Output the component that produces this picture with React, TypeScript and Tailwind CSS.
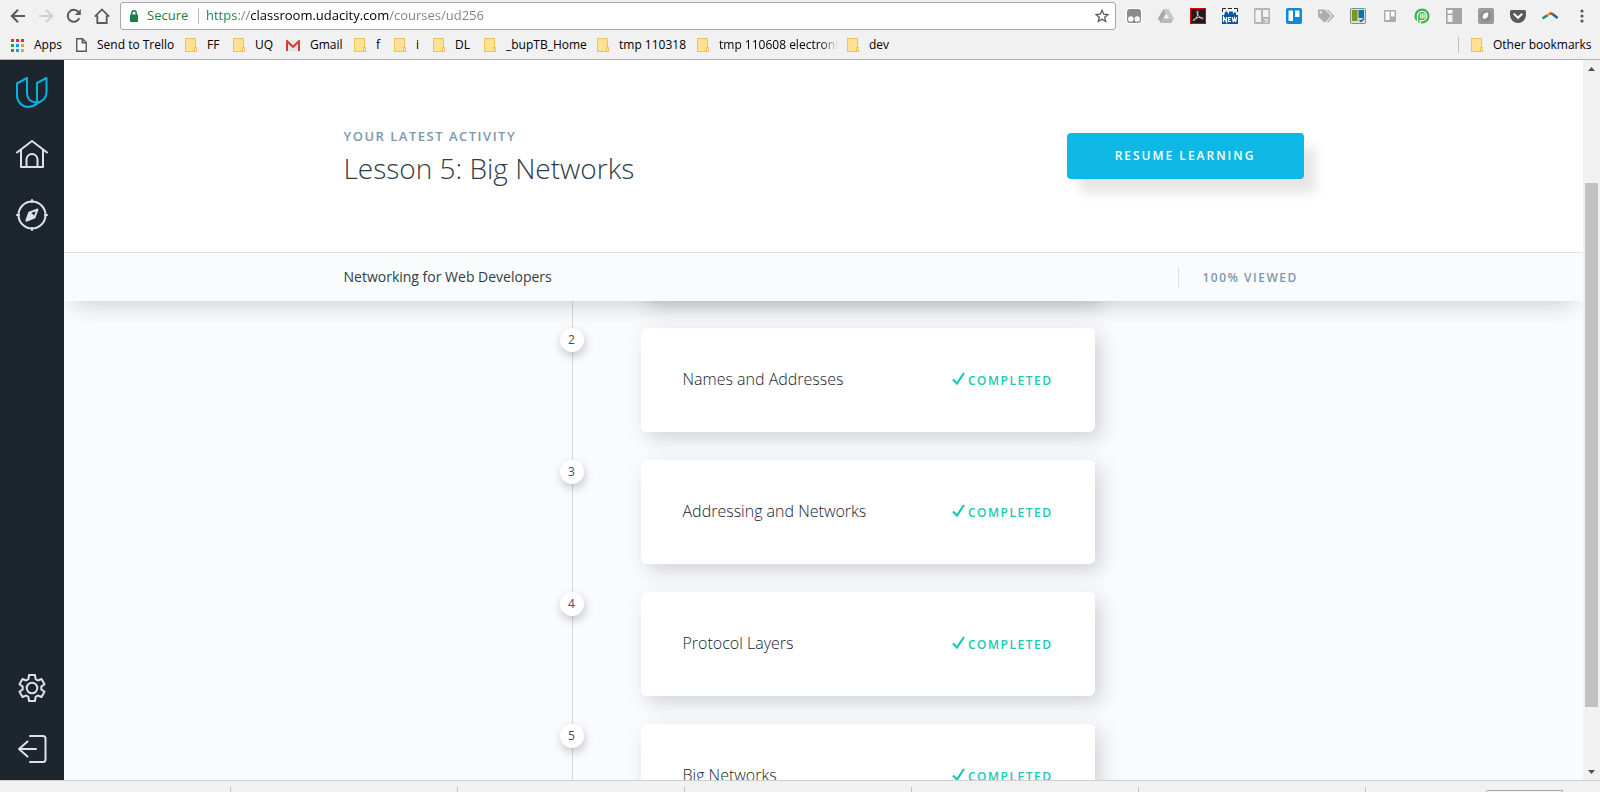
import type { ReactNode } from "react";
import { FaTags } from "react-icons/fa";

function FolderIcon() {
  return (
    <svg width="12" height="14" viewBox="0 0 12 14" className="shrink-0" aria-hidden="true">
      <rect x="0.5" y="0.5" width="10" height="13" fill="#ffe293" stroke="#edc35a" />
      <rect x="9.5" y="9.5" width="2" height="4" fill="#ffe9ad" stroke="#edc35a" />
    </svg>
  );
}

const appDots = [
  ["#f0263c", "#f0263c", "#f0263c"],
  ["#1f9d55", "#1b98f0", "#f5a11c"],
  ["#1f9d55", "#1b98f0", "#f5a11c"],
];

function AppsIcon() {
  return (
    <svg width="13" height="13" viewBox="0 0 13 13" className="shrink-0" aria-hidden="true">
      {appDots.map((row, y) =>
        row.map((fill, x) => <rect key={`${x}-${y}`} x={x * 5} y={y * 5} width="3" height="3" fill={fill} />),
      )}
    </svg>
  );
}

function PageIcon() {
  return (
    <svg width="11" height="14" viewBox="0 0 11 14" className="shrink-0" aria-hidden="true">
      <path d="M0.75 0.75H6.5L10.25 4.5V13.25H0.75Z M6.25 1V4.75H10" fill="#fafafa" stroke="#5a5a5a" strokeWidth="1.4" />
    </svg>
  );
}

function GmailIcon() {
  return (
    <svg width="14" height="11" viewBox="0 0 14 11" className="shrink-0" aria-hidden="true">
      <rect x="0.5" width="13" height="11" rx="1" fill="#e6e6e6" />
      <path d="M1 11V1.2L7 6.8L13 1.2V11" fill="none" stroke="#d63b35" strokeWidth="2" />
    </svg>
  );
}

type Bookmark = { label: string; width: string; icon?: ReactNode; fade?: boolean };

const bookmarks: Bookmark[] = [
  { label: "Apps", width: "w-[65px]", icon: <AppsIcon /> },
  { label: "Send to Trello", width: "w-[109px]", icon: <PageIcon /> },
  { label: "FF", width: "w-[48px]" },
  { label: "UQ", width: "w-[53px]" },
  { label: "Gmail", width: "w-[68px]", icon: <GmailIcon /> },
  { label: "f", width: "w-[40px]" },
  { label: "i", width: "w-[39px]" },
  { label: "DL", width: "w-[51px]" },
  { label: "_bupTB_Home", width: "w-[113px]" },
  { label: "tmp 110318", width: "w-[100px]" },
  { label: "tmp 110608 electroni", width: "w-[150px]", fade: true },
  { label: "dev", width: "w-[60px]" },
];

const extensions: { name: string; art: ReactNode }[] = [
  {
    name: "Scripts",
    art: (
      <>
        <rect x="0" y="0" width="16" height="16" rx="3" fill="#fff" />
        <rect x="1" y="1" width="14" height="14" rx="3" fill="#8c8c8c" />
        <circle cx="4.8" cy="11" r="2.7" fill="#fff" />
        <circle cx="11.2" cy="11" r="2.7" fill="#fff" />
      </>
    ),
  },
  {
    name: "Drive",
    art: (
      <>
        <path d="M5.5 1H10.5L16 10.5H11Z" fill="#c9c9c9" />
        <path d="M5.5 1L8 5.5L2.7 15L0 10.5Z" fill="#aaa" />
        <path d="M5.3 10.5H16L13.3 15H2.7Z" fill="#b9b9b9" />
      </>
    ),
  },
  {
    name: "PDF",
    art: (
      <>
        <rect x="0.5" y="0.5" width="15" height="15" fill="#2b1517" stroke="#e3000f" />
        <path d="M7.3 3.2C8.7 2.8 8 6 7 8.4C6 11 4 13.3 3.2 12.5C2.5 11.5 6 10 8.5 9.5C11 9 13.3 9.4 13 10.6C12.5 11.8 9.4 9.5 8 7.2C7 5.5 6.6 3.6 7.3 3.2Z" fill="none" stroke="#ddd" strokeWidth="0.9" />
      </>
    ),
  },
  {
    name: "New captures",
    art: (
      <>
        <path d="M0.5 4V0.5H4M6 0.5H10M12 0.5H15.5V4" fill="none" stroke="#222" strokeWidth="1" />
        <path d="M0 7H2.5V5L4.500 3L7 6.500V3.500H10.500L12 6.500V4.500H14V7H16V16H0Z" fill="#0d55a0" />
        <path d="M1.5 14V9L4.5 14V9M9 9.5H6.5V13.5H9M6.5 11.5H8.5M10.3 9L11.2 14L12.4 10L13.6 14L14.6 9" fill="none" stroke="#fff" strokeWidth="1.2" />
      </>
    ),
  },
  {
    name: "Board cards",
    art: (
      <>
        <rect width="16" height="16" rx="1" fill="#b4b4b4" />
        <rect x="1.5" y="2" width="5.5" height="12" fill="#f2f2f2" />
        <rect x="9" y="2" width="5.5" height="7" fill="#f2f2f2" />
        <path d="M10 11.5H14L11 14H14" fill="none" stroke="#f2f2f2" />
      </>
    ),
  },
  {
    name: "Trello",
    art: (
      <>
        <rect width="16" height="16" rx="2" fill="#0b8ad6" />
        <rect x="2.5" y="2.5" width="4.5" height="10.5" rx="0.5" fill="#fff" />
        <rect x="9" y="2.5" width="4.5" height="6.5" rx="0.5" fill="#fff" />
      </>
    ),
  },
  { name: "Tags", art: <FaTags size={16} color="#adadad" /> },
  {
    name: "Columns",
    art: (
      <>
        <rect x="0.5" y="0.5" width="15" height="15" rx="1" fill="#cfe0ea" stroke="#6b93ac" />
        <rect x="2" y="2" width="5.5" height="11" fill="#869414" />
        <rect x="8.5" y="2" width="5.5" height="8" fill="#0b73a0" />
        <path d="M9.5 12L11 13.5L14 10.5" fill="none" stroke="#174c6e" strokeWidth="1.2" />
      </>
    ),
  },
  {
    name: "Mini board",
    art: (
      <>
        <rect x="2" y="2" width="12" height="12" rx="1" fill="#adadad" />
        <rect x="3.5" y="3.5" width="4" height="8.5" fill="#fff" />
        <rect x="9" y="3.5" width="3.5" height="5" fill="#fff" />
      </>
    ),
  },
  {
    name: "Print",
    art: (
      <>
        <circle cx="8" cy="8" r="7.6" fill="#3db54a" />
        <path d="M3.500 15V8A4.600 4.600 0 1 1 8.300 12.600H6.200V15.500" fill="none" stroke="#fff" strokeWidth="1.3" />
        <path d="M6.500 5.500V10.500M8.300 5V11M10.200 5.500V10.500M5.500 7H11.500M5.500 9H11.500" stroke="#fff" strokeWidth="0.8" />
      </>
    ),
  },
  {
    name: "Side panel",
    art: (
      <>
        <rect width="16" height="16" fill="#a5a5a5" />
        <rect x="1.5" y="2" width="5" height="3.5" fill="#fff" />
        <rect x="1.5" y="7" width="5" height="7" fill="#f2f2f2" />
      </>
    ),
  },
  {
    name: "Notes",
    art: (
      <>
        <rect width="16" height="16" rx="2" fill="#9a9a9a" />
        <circle cx="8" cy="8" r="5.5" fill="#8a8a8a" />
        <path d="M5 10.500C4 7.500 6 4.300 10 4.600C11 8 9 11.800 5 10.500Z" fill="#fff" />
      </>
    ),
  },
  {
    name: "Pocket",
    art: (
      <>
        <path d="M1.5 2H14.5Q16 2 16 3.5V7A8 8 0 0 1 0 7V3.5Q0 2 1.5 2Z" fill="#58595b" />
        <path d="M4.3 6.3L8 9.8L11.7 6.3" fill="none" stroke="#fff" strokeWidth="2" strokeLinecap="round" />
      </>
    ),
  },
  {
    name: "Arc",
    art: (
      <g fill="none" strokeWidth="2.6">
        <path d="M0.500 10.500L3.500 8.500" stroke="#1e9b56" />
        <path d="M3 8.800L6 7" stroke="#2a7fc0" />
        <path d="M5.500 7.200L8 5.700" stroke="#f2b01e" />
        <path d="M7.500 5.700Q9.500 5.200 11 6.300" stroke="#e0402f" />
        <path d="M10.800 6.200L15.500 10" stroke="#1d63b5" />
      </g>
    ),
  },
  {
    name: "Menu",
    art: (
      <g fill="#5a5a5a">
        <circle cx="8" cy="3" r="1.6" />
        <circle cx="8" cy="8" r="1.6" />
        <circle cx="8" cy="13" r="1.6" />
      </g>
    ),
  },
];

function BrowserBar() {
  return (
    <header className="h-[60px] shrink-0 border-b border-[#b0b0b0] bg-[#f1f1f1] text-black">
      <div className="flex h-8 items-center pr-[10px] pl-[10px]">
        <nav className="flex w-[110px] gap-3 text-[#5a5a5a]">
          <button aria-label="Back">
            <svg width="16" height="16" viewBox="0 0 16 16" fill="none" stroke="currentColor" strokeWidth="2">
              <path d="M15 8H2.5M8 1.8L1.8 8L8 14.2" />
            </svg>
          </button>
          <button aria-label="Forward" className="text-[#d0d0d0]">
            <svg width="16" height="16" viewBox="0 0 16 16" fill="none" stroke="currentColor" strokeWidth="2">
              <path d="M1 8H13.5M8 1.8L14.2 8L8 14.2" />
            </svg>
          </button>
          <button aria-label="Reload">
            <svg width="16" height="16" viewBox="0 0 16 16" fill="none" stroke="currentColor" strokeWidth="2">
              <path d="M13.3 10.2A6 6 0 1 1 12.4 4" />
              <path d="M14.8 1V7H8.8Z" fill="currentColor" stroke="none" />
            </svg>
          </button>
          <button aria-label="Home">
            <svg width="16" height="16" viewBox="0 0 16 16" fill="none" stroke="currentColor" strokeWidth="1.8">
              <path d="M0.8 8.6L8 1.4L15.2 8.6M3.3 7.5V15H12.7V7.5" />
            </svg>
          </button>
        </nav>
        <div className="flex h-7 flex-1 items-center rounded-[3px] border border-[#a9a9a9] bg-white pr-[6px] pl-[9px]">
          <svg width="8" height="12" viewBox="0 0 8 12" aria-hidden="true">
            <path d="M1.8 5V3A2.2 2.2 0 0 1 6.2 3V5" fill="none" stroke="#188045" strokeWidth="1.4" />
            <rect y="4.5" width="8" height="7.5" rx="0.8" fill="#188045" />
          </svg>
          <span className="ml-[9px] w-[51px] text-[13px] text-[#188045]">Secure</span>
          <span className="mr-[7px] h-4 w-px bg-[#b9b9b9]" />
          <input
            aria-label="Address"
            defaultValue="https://classroom.udacity.com/courses/ud256"
            className="min-w-0 flex-1 bg-[linear-gradient(90deg,#188045_32px,#808080_32px,#808080_45px,#000_45px,#000_183px,#808080_183px)] bg-clip-text text-[13px] text-transparent caret-black outline-none"
          />
          <button aria-label="Bookmark this page">
            <svg width="14" height="14" viewBox="0 0 14 14" fill="none" stroke="#5a5a5a" strokeWidth="1.3">
              <path d="M7 1.3L8.7 5.1L12.9 5.5L9.7 8.2L10.7 12.4L7 10.2L3.3 12.4L4.3 8.2L1.1 5.5L5.3 5.1Z" />
            </svg>
          </button>
        </div>
        <div className="ml-[10px] flex gap-4">
          {extensions.map(({ name, art }) => (
            <button key={name} aria-label={name}>
              <svg width="16" height="16" viewBox="0 0 16 16">
                {art}
              </svg>
            </button>
          ))}
        </div>
      </div>
      <div className="flex h-[26px] items-center pl-[11px] text-[12px]">
        {bookmarks.map(({ label, width, icon, fade }) => (
          <a key={label} href="#" className={`flex shrink-0 items-center gap-[10px] whitespace-nowrap ${width}`}>
            {icon ?? <FolderIcon />}
            {fade ? (
              <span className="[mask-image:linear-gradient(90deg,#000_85%,transparent)]">{label}</span>
            ) : (
              label
            )}
          </a>
        ))}
        <a href="#" className="ml-auto flex w-[142px] items-center gap-[10px] whitespace-nowrap">
          <span className="mr-[2px] h-4 w-px bg-[#c0c0c0]" />
          <FolderIcon />
          Other bookmarks
        </a>
      </div>
    </header>
  );
}

function SideIcon({ label, children }: { label: string; children: ReactNode }) {
  return (
    <a href="#" aria-label={label}>
      <svg
        width="32"
        height="32"
        viewBox="0 0 32 32"
        fill="none"
        stroke="currentColor"
        strokeWidth="2"
        strokeLinecap="round"
        strokeLinejoin="round"
      >
        {children}
      </svg>
    </a>
  );
}

function Sidebar() {
  return (
    <nav className="flex w-16 shrink-0 flex-col items-center gap-[29px] bg-[#1e262d] pt-[17px] pb-[15px] text-[#dbe2e8]">
      <span className="flex text-[#02b3e4]">
        <SideIcon label="Udacity">
          <path d="M11 1L1 6.500V18.500A11.500 11.500 0 0 0 12 30C17 30 19.500 27.500 23 25.500C28 23 30.500 20 30.500 15.500V1L21 6V24.500" />
          <path d="M11 1V16C11 21 14 24.500 19 25.500C20.500 25.700 22 25.500 23 25" />
        </SideIcon>
      </span>
      <SideIcon label="Home">
        <path d="M1 14.5L16 3L31 14.5M5 12V29H27V12" />
        <path d="M10.5 29V21.5A5.5 5.5 0 0 1 21.5 21.5V29" />
      </SideIcon>
      <SideIcon label="Explore">
        <circle cx="16" cy="16" r="13.5" />
        <path d="M16 1V3M16 29V31M1 16H3M29 16H31" />
        <path d="M21.5 10.5L18.5 18.3L10.5 21.5L13.4 13.6Z" />
        <path d="M13.4 13.6L10.5 21.5L18.5 18.3Z" fill="currentColor" />
      </SideIcon>
      <span className="mt-auto flex">
        <SideIcon label="Settings">
          <path d="M13 3H19L19.600 7.200L21.800 8.500L25.500 7L28.500 12.200L25.300 14.600V17.400L28.500 19.800L25.500 25L21.800 23.500L19.600 24.800L19 29H13L12.400 24.800L10.200 23.500L6.500 25L3.500 19.800L6.700 17.400V14.600L3.500 12.200L6.500 7L10.200 8.500L12.400 7.200Z" />
          <circle cx="16" cy="16" r="5.3" />
        </SideIcon>
      </span>
      <SideIcon label="Sign out">
        <path d="M14 3H27Q29.500 3 29.500 5.500V26.500Q29.500 29 27 29H14" />
        <path d="M20 16H3M11.500 8.500L3 16L11.500 23.500" />
      </SideIcon>
    </nav>
  );
}

const lessons = [
  { number: 2, title: "Names and Addresses" },
  { number: 3, title: "Addressing and Networks" },
  { number: 4, title: "Protocol Layers" },
  { number: 5, title: "Big Networks" },
];

const cardStyle = "rounded-md bg-white shadow-[6px_7px_20px_rgba(30,48,60,0.19)]";

function LessonList() {
  return (
    <div className="mx-auto max-w-[960px]">
      <div className="relative ml-[216px] w-[535px]">
        <div className="absolute top-0 bottom-0 left-3 w-px bg-[#d5d9dd]" />
        <div className={`-mt-[105px] mb-7 ml-[81px] h-[104px] ${cardStyle}`} />
        <ol className="flex flex-col gap-7">
          {lessons.map(({ number, title }) => (
            <li key={number} className="relative flex items-start justify-between">
              <span className="flex h-6 w-6 items-center justify-center rounded-full bg-white text-[12px] text-[#424c55] shadow-[1px_4px_10px_rgba(30,40,48,0.25)]">
                {number}
              </span>
              <a href="#" className={`flex h-[104px] w-[454px] items-center px-[42px] ${cardStyle}`}>
                <span className="flex flex-1 items-baseline justify-between pb-[2px]">
                  <span className="text-[16px] leading-6 font-light text-[#17232d]">{title}</span>
                  <span className="flex items-baseline gap-[3px] text-[12px] font-semibold tracking-[1.5px] text-[#15c9b3]">
                    <svg width="13" height="13" viewBox="0 0 13 13" fill="none" stroke="currentColor" strokeWidth="2.200" aria-hidden="true">
                      <path d="M1 7.500L5 11.500L12 1" />
                    </svg>
                    COMPLETED
                  </span>
                </span>
              </a>
            </li>
          ))}
        </ol>
      </div>
    </div>
  );
}

function Course() {
  return (
    <main className="flex min-w-0 flex-1 flex-col overflow-hidden bg-[#fafbfd]">
      <section className="relative z-10 shrink-0 bg-white shadow-[0_14px_22px_-10px_rgba(0,0,0,0.18)]">
        <div className="mx-auto flex h-48 max-w-[960px] items-center justify-between">
          <div>
            <p className="text-[13px] leading-6 font-semibold tracking-[1.5px] text-[#7d97ad]">YOUR LATEST ACTIVITY</p>
            <h1 className="text-[28px] leading-10 font-light text-[#2e3d49]">Lesson 5: Big Networks</h1>
          </div>
          <button className="h-[46px] w-[237px] rounded bg-[#0db8e5] text-[12px] font-semibold tracking-[2px] text-white shadow-[12px_14px_12px_rgba(0,0,0,0.1)]">
            RESUME LEARNING
          </button>
        </div>
        <div className="border-t border-[#dbe2e8] bg-[#fafbfd]">
          <div className="mx-auto flex h-12 max-w-[960px] items-center">
            <div className="flex flex-1 items-baseline justify-between">
              <h2 className="text-[14px] leading-[22px] text-[#2e3d49]">Networking for Web Developers</h2>
              <p className="w-[126px] border-l border-[#dbe2e8] pl-6 text-[12px] leading-[22px] font-semibold tracking-[1.5px] whitespace-nowrap text-[#7d97ad]">
                100% VIEWED
              </p>
            </div>
          </div>
        </div>
      </section>
      <section className="min-h-0 flex-1">
        <LessonList />
      </section>
    </main>
  );
}

function ScrollBar() {
  return (
    <div className="flex w-[17px] shrink-0 flex-col items-center justify-between bg-[#f1f1f1] text-[#505050]">
      <button aria-label="Scroll up" className="flex h-[17px] w-full items-center justify-center">
        <svg width="7" height="4" viewBox="0 0 7 4" fill="currentColor">
          <path d="M3.500 0L7 4H0Z" />
        </svg>
      </button>
      <div className="flex w-[13px] flex-1 flex-col">
        <div className="flex-[106]" />
        <div className="flex-[524] bg-[#c1c1c1]" />
        <div className="flex-[56]" />
      </div>
      <button aria-label="Scroll down" className="flex h-[17px] w-full items-center justify-center">
        <svg width="7" height="4" viewBox="0 0 7 4" fill="currentColor">
          <path d="M0 0H7L3.500 4Z" />
        </svg>
      </button>
    </div>
  );
}

function DownloadShelf() {
  return (
    <footer className="flex h-3 shrink-0 items-end overflow-hidden border-t border-[#d0d0d0] bg-[#f1f1f1] pl-1">
      {[1, 2, 3, 4, 5, 6].map((slot) => (
        <div key={slot} className="h-[5px] w-[227px] border-r border-[#c0c0c0]" />
      ))}
      <div className="mr-[37px] ml-auto h-[2px] w-[77px] rounded-t-sm border-x border-t border-[#a9a9a9]" />
    </footer>
  );
}

export default function App() {
  return (
    <div className="flex h-screen flex-col overflow-hidden bg-[#f1f1f1] font-['Open_Sans','Noto_Sans',sans-serif]">
      <BrowserBar />
      <div className="flex min-h-0 flex-1">
        <Sidebar />
        <Course />
        <ScrollBar />
      </div>
      <DownloadShelf />
    </div>
  );
}
